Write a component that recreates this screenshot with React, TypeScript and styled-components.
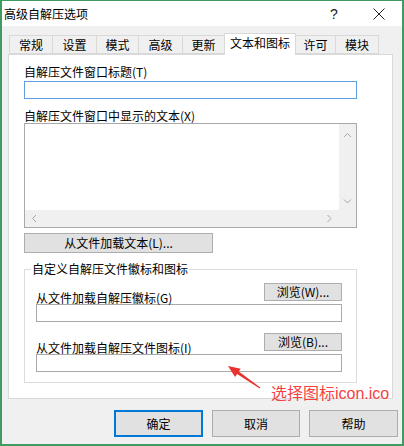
import React from "react";
import styled, { createGlobalStyle } from "styled-components";

const Global = createGlobalStyle`
  html, body { margin: 0; padding: 0; background: #fff; }
  * { box-sizing: border-box; }
  body { font-family: "Noto Sans CJK SC", "Noto Sans", sans-serif; font-size: 12px; color: #000; }
`;

const Win = styled.div`
  position: relative;
  width: 404px;
  height: 446px;
  border: 2px solid #3f9b62;
  border-top-width: 1px;
  background: #f0f0f0;
  display: flex;
  flex-direction: column;
  overflow: hidden;
`;

const TitleBar = styled.div`
  height: 25px;
  background: #fff;
  display: flex;
  align-items: center;
  padding-left: 2px;
`;

const Title = styled.div`
  flex: 1;
  font-size: 12px;
  line-height: 16px;
`;

const TitleBtn = styled.div<{ $w: number }>`
  width: ${(p) => p.$w}px;
  height: 25px;
  display: flex;
  align-items: center;
  justify-content: center;
  font-family: "Liberation Sans", sans-serif;
  font-size: 14px;
  color: #222;
`;

const Body = styled.div`
  flex: 1;
  display: flex;
  flex-direction: column;
  padding: 7px 0 0 6px;
`;

const TabStrip = styled.div`
  display: flex;
  align-items: flex-end;
  height: 21px;
  padding-left: 1px;
  position: relative;
  z-index: 1;
`;

const Tab = styled.div<{ $w: number; $active?: boolean }>`
  width: ${(p) => p.$w}px;
  height: ${(p) => (p.$active ? 22 : 19)}px;
  margin-bottom: ${(p) => (p.$active ? -1 : 0)}px;
  margin-right: -1px;
  border: 1px solid #d9d9d9;
  border-bottom: ${(p) => (p.$active ? "none" : "1px solid #d9d9d9")};
  background: ${(p) => (p.$active ? "#fff" : "#f0f0f0")};
  position: relative;
  z-index: ${(p) => (p.$active ? 2 : 1)};
  display: flex;
  align-items: ${(p) => (p.$active ? "flex-start" : "center")};
  padding-top: ${(p) => (p.$active ? 1 : 0)}px;
  justify-content: center;
  font-size: 12px;
  line-height: 16px;
`;

const Panel = styled.div`
  width: 385px;
  height: 345px;
  background: #fff;
  border: 1px solid #d9d9d9;
  padding: 10px 35px 15px 15px;
  display: flex;
  flex-direction: column;
`;

const Label = styled.div<{ $mt?: number }>`
  font-size: 12px;
  line-height: 14px;
  margin-top: ${(p) => p.$mt ?? 0}px;
  white-space: nowrap;
`;

const TextBox = styled.div<{ $focus?: boolean; $mt?: number; $w?: number }>`
  width: ${(p) => p.$w ?? 333}px;
  height: 18px;
  margin-top: ${(p) => p.$mt ?? 0}px;
  background: #fff;
  border: 1px solid ${(p) => (p.$focus ? "#5c9fe3" : "#a9a9a9")};
`;

const TextArea = styled.div`
  width: 333px;
  height: 105px;
  border: 1px solid #a9a9a9;
  background: #fff;
  display: grid;
  grid-template-columns: 1fr 17px;
  grid-template-rows: 1fr 17px;
`;

const VScroll = styled.div`
  background: #f0f0f0;
  display: flex;
  flex-direction: column;
  justify-content: space-between;
  align-items: center;
  padding: 8px 0 5px;
`;

const HScroll = styled.div`
  background: #f0f0f0;
  display: flex;
  justify-content: space-between;
  align-items: center;
  padding: 0 6px 0 6px;
`;

const Corner = styled.div`
  background: #f0f0f0;
`;

const Button = styled.div<{ $w: number; $h: number; $mt?: number; $default?: boolean }>`
  width: ${(p) => p.$w}px;
  height: ${(p) => p.$h}px;
  margin-top: ${(p) => p.$mt ?? 0}px;
  background: #e1e1e1;
  border: 1px solid ${(p) => (p.$default ? "#0078d7" : "#adadad")};
  box-shadow: ${(p) => (p.$default ? "inset 0 0 0 1px #0078d7" : "none")};
  display: flex;
  align-items: center;
  justify-content: center;
  font-size: 12px;
  line-height: 14px;
  white-space: nowrap;
  flex-shrink: 0;
`;

const Group = styled.fieldset`
  margin: 9px 0 0 0;
  width: 333px;
  border: 1px solid #dcdcdc;
  padding: 7px 14px 10px 11px;
  min-width: 0;
`;

const Legend = styled.legend`
  font-size: 12px;
  line-height: 14px;
  padding: 0 1px;
  margin-left: -5px;
  white-space: nowrap;
`;

const BrowseRow = styled.div<{ $mt?: number }>`
  display: flex;
  align-items: flex-end;
  justify-content: space-between;
  margin-top: ${(p) => p.$mt ?? 0}px;
  width: 306px;
`;

const RowLabel = styled.div`
  font-size: 12px;
  line-height: 14px;
  margin-bottom: -4px;
  white-space: nowrap;
`;

const Footer = styled.div`
  display: flex;
  justify-content: flex-end;
  gap: 9px;
  padding-right: 4px;
  margin-top: 11px;
`;

const Overlay = styled.svg`
  position: absolute;
  left: -2px;
  top: -1px;
  width: 404px;
  height: 446px;
  pointer-events: none;
  z-index: 5;
`;

const Note = styled.div`
  position: absolute;
  left: 269px;
  top: 382px;
  font-size: 16px;
  line-height: 18px;
  color: #f4413f;
  white-space: nowrap;
  z-index: 6;
  font-family: "Noto Sans CJK SC", sans-serif;
`;

const NoteLatin = styled.span`
  font-family: "Liberation Sans", sans-serif;
`;

const Chevron = ({ d }: { d: "up" | "down" | "left" | "right" }) => {
  const paths: Record<string, string> = {
    up: "M1 5 L4.5 1.5 L8 5",
    down: "M1 1.5 L4.5 5 L8 1.5",
    left: "M5 1 L1.5 4.5 L5 8",
    right: "M1.5 1 L5 4.5 L1.5 8",
  };
  const vert = d === "up" || d === "down";
  return (
    <svg width={vert ? 9 : 7} height={vert ? 7 : 9} viewBox={vert ? "0 0 9 7" : "0 0 7 9"}>
      <path d={paths[d]} fill="none" stroke="#a6a6a6" strokeWidth="1" />
    </svg>
  );
};

const tabs = [
  { t: "常规", w: 44 },
  { t: "设置", w: 45 },
  { t: "模式", w: 43 },
  { t: "高级", w: 45 },
  { t: "更新", w: 43 },
  { t: "文本和图标", w: 72, active: true },
  { t: "许可", w: 41 },
  { t: "模块", w: 44 },
];

export default function App() {
  return (
    <>
      <Global />
      <Win>
        <TitleBar>
          <Title>高级自解压选项</Title>
          <TitleBtn $w={20}>?</TitleBtn>
          <TitleBtn $w={12} />
          <TitleBtn $w={46}>
            <svg width="12" height="12" viewBox="0 0 12 12">
              <path d="M0.5 0.5 L11.5 11.5 M11.5 0.5 L0.5 11.5" stroke="#222" strokeWidth="1" />
            </svg>
          </TitleBtn>
        </TitleBar>
        <Body>
          <TabStrip>
            {tabs.map((x) => (
              <Tab key={x.t} $w={x.w} $active={x.active}>
                {x.t}
              </Tab>
            ))}
          </TabStrip>
          <Panel>
            <Label>自解压文件窗口标题(T)</Label>
            <TextBox $focus $mt={2} />
            <Label $mt={10}>自解压文件窗口中显示的文本(X)</Label>
            <TextArea>
              <div />
              <VScroll>
                <Chevron d="up" />
                <Chevron d="down" />
              </VScroll>
              <HScroll>
                <Chevron d="left" />
                <Chevron d="right" />
              </HScroll>
              <Corner />
            </TextArea>
            <Button $w={189} $h={20} $mt={5}>
              从文件加载文本(L)...
            </Button>
            <Group>
              <Legend>自定义自解压文件徽标和图标</Legend>
              <BrowseRow>
                <RowLabel>从文件加载自解压徽标(G)</RowLabel>
                <Button $w={78} $h={18}>
                  浏览(W)...
                </Button>
              </BrowseRow>
              <TextBox $mt={3} $w={306} />
              <BrowseRow $mt={11}>
                <RowLabel>从文件加载自解压文件图标(I)</RowLabel>
                <Button $w={78} $h={18}>
                  浏览(B)...
                </Button>
              </BrowseRow>
              <TextBox $mt={3} $w={306} />
            </Group>
          </Panel>
          <Footer>
            <Button $w={89} $h={27} $default>
              确定
            </Button>
            <Button $w={88} $h={27}>
              取消
            </Button>
            <Button $w={89} $h={27}>
              帮助
            </Button>
          </Footer>
        </Body>
        <Overlay viewBox="0 0 404 446">
          <polygon
            points="228,366 240.7,368.7 238.8,371.6 260.3,387.6 259.7,388.4 237.1,374.0 235.1,376.9"
            fill="#e83330"
          />
        </Overlay>
        <Note>
          选择图标<NoteLatin>icon.ico</NoteLatin>
        </Note>
      </Win>
    </>
  );
}
